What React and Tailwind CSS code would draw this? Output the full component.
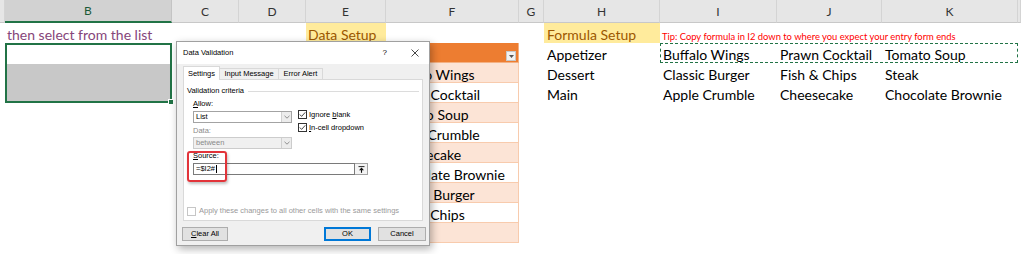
const headers = [
  { label: '', cls: 'col-start-1' },
  { label: 'B', cls: 'col-start-2', active: true },
  { label: 'C', cls: 'col-start-3' },
  { label: 'D', cls: 'col-start-4' },
  { label: 'E', cls: 'col-start-5' },
  { label: 'F', cls: 'col-start-6' },
  { label: 'G', cls: 'col-start-7' },
  { label: 'H', cls: 'col-start-8' },
  { label: 'I', cls: 'col-start-9' },
  { label: 'J', cls: 'col-start-10' },
  { label: 'K', cls: 'col-start-11' },
  { label: '', cls: 'col-start-12' }
];

const menu = [
  { text: 'Buffalo Wings', row: 'row-start-4', shade: true },
  { text: 'Prawn Cocktail', row: 'row-start-5' },
  { text: 'Tomato Soup', row: 'row-start-6', shade: true },
  { text: 'Apple Crumble', row: 'row-start-7' },
  { text: 'Cheesecake', row: 'row-start-8', shade: true },
  { text: 'Chocolate Brownie', row: 'row-start-9' },
  { text: 'Classic Burger', row: 'row-start-10', shade: true },
  { text: 'Fish & Chips', row: 'row-start-11' },
  { text: '', row: 'row-start-12', shade: true }
];

const formula = [
  { cls: 'col-start-8 row-start-3', text: 'Appetizer' },
  { cls: 'col-start-8 row-start-4', text: 'Dessert' },
  { cls: 'col-start-8 row-start-5', text: 'Main' },
  { cls: 'col-start-9 row-start-3', text: 'Buffalo Wings' },
  { cls: 'col-start-10 row-start-3', text: 'Prawn Cocktail' },
  { cls: 'col-start-11 row-start-3', text: 'Tomato Soup' },
  { cls: 'col-start-9 row-start-4', text: 'Classic Burger' },
  { cls: 'col-start-10 row-start-4', text: 'Fish & Chips' },
  { cls: 'col-start-11 row-start-4', text: 'Steak' },
  { cls: 'col-start-9 row-start-5', text: 'Apple Crumble' },
  { cls: 'col-start-10 row-start-5', text: 'Cheesecake' },
  { cls: 'col-start-11 row-start-5', text: 'Chocolate Brownie' }
];

function Check({ checked, disabled }) {
  return (
    <svg width="9" height="9" viewBox="0 0 9 9" className="shrink-0">
      <rect x="0.5" y="0.5" width="8" height="8" fill="white" stroke={disabled ? '#c6c6c6' : '#333'} />
      {checked && <path d="M1.8 4.5 L3.6 6.4 L7.3 2.3" fill="none" stroke="#333" strokeWidth="0.9" />}
    </svg>
  );
}

function Combo({ value, disabled }) {
  return (
    <div
      className={`flex h-[12px] w-[99px] items-center border ${
        disabled ? 'border-[#cccccc] bg-[#f0f0f0] text-[#8a8a8a]' : 'border-[#a3a3a3] bg-white'
      }`}
    >
      <span className="flex-1 pl-[2px]">{value}</span>
      <span className="flex h-full w-[10px] items-center justify-center border-l border-[#d0d0d0] bg-[#ececec]">
        <svg width="6" height="4" viewBox="0 0 6 4">
          <path d="M0.5 0.8 L3 3.2 L5.5 0.8" fill="none" stroke="#777" strokeWidth="0.8" />
        </svg>
      </span>
    </div>
  );
}

function Dialog() {
  return (
    <div className="absolute left-[176px] top-[41px] flex h-[205px] w-[254px] flex-col border border-[#a0a0a0] bg-[#f0f0f0] font-['Liberation_Sans',sans-serif] text-[7.5px] leading-[10px] text-black shadow-[2px_3px_8px_rgba(0,0,0,0.3)]">
      <div className="flex h-[22px] items-center bg-white pl-[6px]">
        <span>Data Validation</span>
        <span className="ml-auto text-[8px]">?</span>
        <svg width="8" height="8" viewBox="0 0 8 8" className="ml-[24px] mr-[10px]">
          <path d="M0.5 0.5 L7.5 7.5 M7.5 0.5 L0.5 7.5" stroke="#333" strokeWidth="0.9" />
        </svg>
      </div>

      <div className="relative z-10 flex items-end pl-[6px] pt-[2px]">
        <div className="-mb-px flex h-[14px] w-[37px] items-center justify-center border-x border-t border-[#d9d9d9] bg-white">
          Settings
        </div>
        <div className="flex h-[11px] w-[59px] items-center justify-center border-r border-t border-[#d9d9d9]">
          Input Message
        </div>
        <div className="flex h-[11px] w-[44px] items-center justify-center border-r border-t border-[#d9d9d9]">
          Error Alert
        </div>
      </div>

      <div className="relative mx-[6px] h-[142px] border border-[#d9d9d9] bg-white">
        <div className="flex items-center pl-[3px] pr-[3px] pt-[6px]">
          <span>Validation criteria</span>
          <span className="ml-[4px] flex-1 border-t border-[#dcdcdc]" />
        </div>

        <div className="mt-[3px] flex pl-[9px]">
          <div className="flex flex-col">
            <span>
              <u>A</u>llow:
            </span>
            <div className="mt-[2px]">
              <Combo value="List" />
            </div>
            <span className="mt-[3px] text-[#8a8a8a]">Data:</span>
            <div className="mt-[1px]">
              <Combo value="between" disabled />
            </div>
          </div>
          <div className="ml-[6px] flex flex-col pt-[9px]">
            <div className="flex h-[13px] items-center gap-[2px]">
              <Check checked />
              <span>
                Ignore <u>b</u>lank
              </span>
            </div>
            <div className="flex h-[13px] items-center gap-[2px]">
              <Check checked />
              <span>
                <u>I</u>n-cell dropdown
              </span>
            </div>
          </div>
        </div>

        <div className="mt-[2px] pl-[9px]">
          <u>S</u>ource:
        </div>
        <div className="mt-[2px] flex pl-[9px]">
          <div className="flex h-[12px] w-[162px] items-center border border-[#7a7a7a] bg-white pl-[2px]">
            =$I2#<span className="ml-px h-[8px] w-px bg-black" />
          </div>
          <div className="flex h-[12px] w-[13px] items-center justify-center border border-l-0 border-[#a3a3a3] bg-[#f4f4f4]">
            <svg width="7" height="7" viewBox="0 0 7 7">
              <path d="M0.5 0.6 H6.5" stroke="#111" strokeWidth="0.9" />
              <path d="M3.5 1.6 L6 4.2 H1 Z" fill="#111" />
              <path d="M3.5 4 V6.8" stroke="#111" strokeWidth="1.1" />
            </svg>
          </div>
        </div>

        <div className="mt-[31px] flex items-center gap-[3px] pl-[3px] text-[#9a9a9a]">
          <Check disabled />
          <span>Apply these changes to all other cells with the same settings</span>
        </div>

        <div className="absolute left-[3px] top-[71px] h-[31px] w-[40px] rounded-[3px] border-2 border-[#e2343a] shadow-[1px_2px_3px_rgba(0,0,0,0.25)]" />
      </div>

      <div className="mt-[6px] flex pl-[5px] pr-[3px]">
        <div className="flex h-[14px] w-[46px] items-center justify-center border border-[#adadad] bg-[#e1e1e1]">
          <span>
            <u>C</u>lear All
          </span>
        </div>
        <div className="ml-auto flex h-[14px] w-[47px] items-center justify-center border-2 border-[#0078d7] bg-[#e1e1e1]">
          OK
        </div>
        <div className="ml-[7px] flex h-[14px] w-[48px] items-center justify-center border border-[#adadad] bg-[#e1e1e1]">
          Cancel
        </div>
      </div>
    </div>
  );
}

export default function App() {
  return (
    <div className="relative h-[254px] w-[1021px] overflow-hidden bg-white font-['Lato',sans-serif] text-[14px] leading-[23px] text-black">
      <div className="grid grid-cols-[5px_167px_67px_67px_80px_133px_25px_116px_117px_105px_136px_3px] grid-rows-[23px_repeat(11,20px)_11px]">
        {headers.map((h, i) => (
          <div
            key={i}
            className={`${h.cls} row-start-1 flex items-center justify-center border-r pt-[1px] text-[12px] leading-[14px] ${
              h.active
                ? 'border-[#c4c4c4] border-b-2 border-b-[#217346] bg-[#d2d2d2] text-[#1c5a38]'
                : 'border-[#d4d4d4] border-b border-b-[#c8c8c8] bg-[#e6e6e6] text-[#333]'
            }`}
          >
            {h.label}
          </div>
        ))}

        <div className="col-start-2 row-start-2 whitespace-nowrap pl-[2px] text-[#86457a]">
          <span className="underline decoration-[#86457a] underline-offset-[3px]">then select from the list</span>
        </div>

        <div className="relative col-start-2 row-start-3 row-span-3 flex flex-col border-2 border-[#217346]">
          <div className="h-[19px] bg-white" />
          <div className="flex-1 bg-[#c8c8c8]" />
          <span className="absolute -bottom-[4px] -right-[4px] h-[6px] w-[6px] border border-white bg-[#217346]" />
        </div>

        <div className="col-start-5 row-start-2 bg-[#ffeb9c] pl-[2px] text-[#9c5700]">Data Setup</div>
        <div className="col-start-8 row-start-2 bg-[#ffeb9c] pl-[3px] text-[#9c5700]">Formula Setup</div>
        <div className="col-start-9 row-start-2 whitespace-nowrap pl-[2px] pt-[4px] text-[9.4px] leading-[20px] text-[#ff0000]">
          Tip: Copy formula in I2 down to where you expect your entry form ends
        </div>

        {formula.map((f) => (
          <div key={f.cls} className={`${f.cls} whitespace-nowrap pl-[3px]`}>
            {f.text}
          </div>
        ))}
        <div className="col-start-9 col-span-3 row-start-3 border border-dashed border-[#217346]" />

        <div className="col-start-6 row-start-3 flex items-end justify-end border-b border-r border-[#f4b183] bg-[#ed7d31] pb-[1px] pr-[2px]">
          <span className="flex h-[10px] w-[10px] items-center justify-center border border-[#c8c8c8] bg-[#f2f2f2]">
            <svg width="5" height="3" viewBox="0 0 5 3">
              <path d="M0 0 H5 L2.5 3 Z" fill="#555" />
            </svg>
          </span>
        </div>
        {menu.map((m) => (
          <div
            key={m.row}
            className={`${m.row} relative col-start-6 whitespace-nowrap border-b border-r border-[#f8cbad] pl-[2px] ${
              m.shade ? 'bg-[#fce4d6]' : 'bg-white'
            }`}
          >
            {m.text}
          </div>
        ))}
      </div>

      <Dialog />
    </div>
  );
}
